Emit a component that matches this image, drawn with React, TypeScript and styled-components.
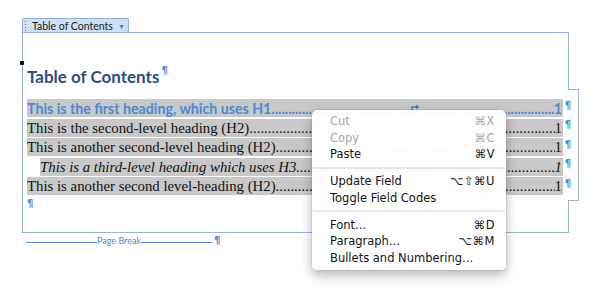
import React from "react";
import styled, { createGlobalStyle } from "styled-components";

const GlobalStyle = createGlobalStyle`
  html, body {
    margin: 0;
    padding: 0;
    background: #ffffff;
    width: 600px;
    height: 291px;
    overflow: hidden;
  }
`;

const Page = styled.div`
  position: relative;
  width: 600px;
  height: 291px;
  padding: 18px 0 0 22px;
  box-sizing: border-box;
`;

const Tab = styled.div`
  display: flex;
  align-items: center;
  gap: 4px;
  height: 14px;
  width: 107px;
  box-sizing: border-box;
  padding: 0 3px 0 2px;
  background: #cde1f5;
  border: 1px solid #8eb0dc;
  border-bottom: none;
  border-radius: 2px 2px 0 0;
  font-family: "Lato", "Open Sans", sans-serif;
  font-size: 10.5px;
  white-space: nowrap;
  color: #1c1c1c;
`;

const Grip = styled.span`
  width: 1px;
  height: 10px;
  margin-right: 2px;
  background: repeating-linear-gradient(#5a7aa8 0 1px, transparent 1px 3px);
`;

const TabLabel = styled.span`
  flex: 1;
`;

const TabArrow = styled.span`
  font-size: 7px;
  color: #4a7cc4;
`;

const FrameWrap = styled.div`
  display: flex;
  width: 557px;
`;

const Frame = styled.div`
  position: relative;
  width: 546px;
  height: 201px;
  box-sizing: border-box;
  border: 1px solid #97b2dc;
  border-right: none;
  padding: 33px 0 0 4px;
`;

const Edge = styled.div`
  display: flex;
  flex-direction: column;
  width: 11px;
  height: 201px;
`;

const EdgeSeg = styled.div<{ $h: number; $out?: boolean }>`
  height: ${(p) => p.$h}px;
  box-sizing: border-box;
  ${(p) =>
    p.$out
      ? `border-top: 1px solid #97b2dc; border-right: 1px solid #97b2dc; border-bottom: 1px solid #97b2dc;`
      : `border-left: 1px solid #97b2dc;`}
`;

const Handle = styled.div`
  position: absolute;
  left: -3px;
  top: 28px;
  width: 4px;
  height: 4px;
  background: #111;
`;

const Heading = styled.div`
  font-family: "Lato", "Open Sans", sans-serif;
  font-weight: 700;
  font-size: 17px;
  line-height: 22px;
  color: #2d4f7e;
  margin-bottom: 11px;
`;

const Pilcrow = styled.span<{ $size?: number }>`
  font-family: "DejaVu Sans", sans-serif;
  font-weight: 700;
  font-size: ${(p) => p.$size ?? 10}px;
  color: #4a8ad6;
  margin-left: 2px;
  vertical-align: top;
  line-height: 1;
`;

const Rows = styled.div`
  display: flex;
  flex-direction: column;
  gap: 1.5px;
`;

const RowLine = styled.div`
  display: flex;
  align-items: center;
  width: 546px;
`;

const Row = styled.div<{ $indent?: number; $h1?: boolean; $italic?: boolean }>`
  display: flex;
  align-items: flex-end;
  height: 18px;
  width: ${(p) => 536 - (p.$indent ?? 0)}px;
  margin-left: ${(p) => p.$indent ?? 0}px;
  background: #c8c8c8;
  overflow: hidden;
  white-space: nowrap;
  font-family: ${(p) =>
    p.$h1 ? `"Lato", "Open Sans", sans-serif` : `"Liberation Serif", serif`};
  font-weight: ${(p) => (p.$h1 ? 700 : 400)};
  font-style: ${(p) => (p.$italic ? "italic" : "normal")};
  font-size: ${(p) => (p.$h1 ? 14.2 : 14.8)}px;
  line-height: 17px;
  color: ${(p) => (p.$h1 ? "#4a8ad6" : "#111")};
`;

const Leader = styled.span`
  flex: 1;
  overflow: hidden;
  &::after {
    content: "${".".repeat(200)}";
  }
`;

const PageNum = styled.span`
  padding-right: 1px;
`;

const RowMark = styled.span`
  width: 10px;
  display: flex;
  justify-content: center;
  font-family: "DejaVu Sans", sans-serif;
  font-weight: 700;
  font-size: 10px;
  color: #4a8ad6;
  margin-top: -6px;
`;

const EndMark = styled.div`
  margin-top: 3px;
  height: 12px;
  font-family: "DejaVu Sans", sans-serif;
  font-weight: 700;
  font-size: 10px;
  color: #4a8ad6;
`;

const BreakLine = styled.div`
  display: flex;
  align-items: center;
  margin: 2px 0 0 4px;
  width: 200px;
  font-family: "Lato", "Open Sans", sans-serif;
  font-size: 9px;
  color: #4a8ad6;
`;

const Rule = styled.span<{ $w: number }>`
  width: ${(p) => p.$w}px;
  height: 1px;
  background: #4a8ad6;
  margin-top: 3px;
`;

const Caret = styled.svg`
  position: absolute;
  left: 411px;
  top: 104px;
`;

const Menu = styled.div`
  position: absolute;
  left: 312px;
  top: 110px;
  width: 194px;
  box-sizing: border-box;
  padding: 3px 0 4px;
  background: rgba(255, 255, 255, 0.97);
  border-radius: 5px;
  box-shadow: 0 5px 12px rgba(0, 0, 0, 0.3), 0 0 0 1px rgba(0, 0, 0, 0.05);
  font-family: "DejaVu Sans", sans-serif;
  font-size: 11.5px;
`;

const Item = styled.div<{ $disabled?: boolean }>`
  display: flex;
  justify-content: space-between;
  height: 16.5px;
  line-height: 16.5px;
  padding: 0 11px 0 18px;
  color: ${(p) => (p.$disabled ? "#a8a8a8" : "#141414")};
`;

const Shortcut = styled.span`
  letter-spacing: 0.5px;
`;

const Separator = styled.div`
  height: 2px;
  margin: 4px 1px 4.5px;
  background: #e6e6e6;
`;

const rows = [
  { text: "This is the first heading, which uses H1", h1: true },
  { text: "This is the second-level heading (H2) " },
  { text: "This is another second-level heading (H2)" },
  { text: "This is a third-level heading which uses H3", indent: 13, italic: true },
  { text: "This is another second level-heading (H2)" },
];

const menu: Array<{ label: string; key?: string; disabled?: boolean } | "sep"> = [
  { label: "Cut", key: "⌘X", disabled: true },
  { label: "Copy", key: "⌘C", disabled: true },
  { label: "Paste", key: "⌘V" },
  "sep",
  { label: "Update Field", key: "⌥⇧⌘U" },
  { label: "Toggle Field Codes" },
  "sep",
  { label: "Font...", key: "⌘D" },
  { label: "Paragraph...", key: "⌥⌘M" },
  { label: "Bullets and Numbering..." },
];

export default function App() {
  return (
    <>
      <GlobalStyle />
      <Page>
        <Tab>
          <Grip />
          <TabLabel>Table of Contents</TabLabel>
          <TabArrow>▼</TabArrow>
        </Tab>
        <FrameWrap>
          <Frame>
            <Handle />
            <Heading>
              Table of Contents<Pilcrow $size={10}>¶</Pilcrow>
            </Heading>
            <Rows>
              {rows.map((r, i) => (
                <RowLine key={i}>
                  <Row $indent={r.indent} $h1={r.h1} $italic={r.italic}>
                    <span>{r.text}</span>
                    <Leader />
                    <PageNum>1</PageNum>
                  </Row>
                  <RowMark>¶</RowMark>
                </RowLine>
              ))}
            </Rows>
            <EndMark>¶</EndMark>
          </Frame>
          <Edge>
            <EdgeSeg $h={57} />
            <EdgeSeg $h={112} $out />
            <EdgeSeg $h={32} />
          </Edge>
        </FrameWrap>
        <BreakLine>
          <Rule $w={71} />
          <span>Page Break</span>
          <Rule $w={71} />
          <Pilcrow $size={10}>¶</Pilcrow>
        </BreakLine>
        <Caret width="9" height="7" viewBox="0 0 9 7">
          <path d="M1 6 V3 H6" stroke="#3d7fd0" strokeWidth="1.4" fill="none" />
          <path d="M5 0.5 L8.5 3 L5 5.5 Z" fill="#3d7fd0" />
        </Caret>
        <Menu>
          {menu.map((m, i) =>
            m === "sep" ? (
              <Separator key={i} />
            ) : (
              <Item key={i} $disabled={m.disabled}>
                <span>{m.label}</span>
                {m.key && <Shortcut>{m.key}</Shortcut>}
              </Item>
            )
          )}
        </Menu>
      </Page>
    </>
  );
}
